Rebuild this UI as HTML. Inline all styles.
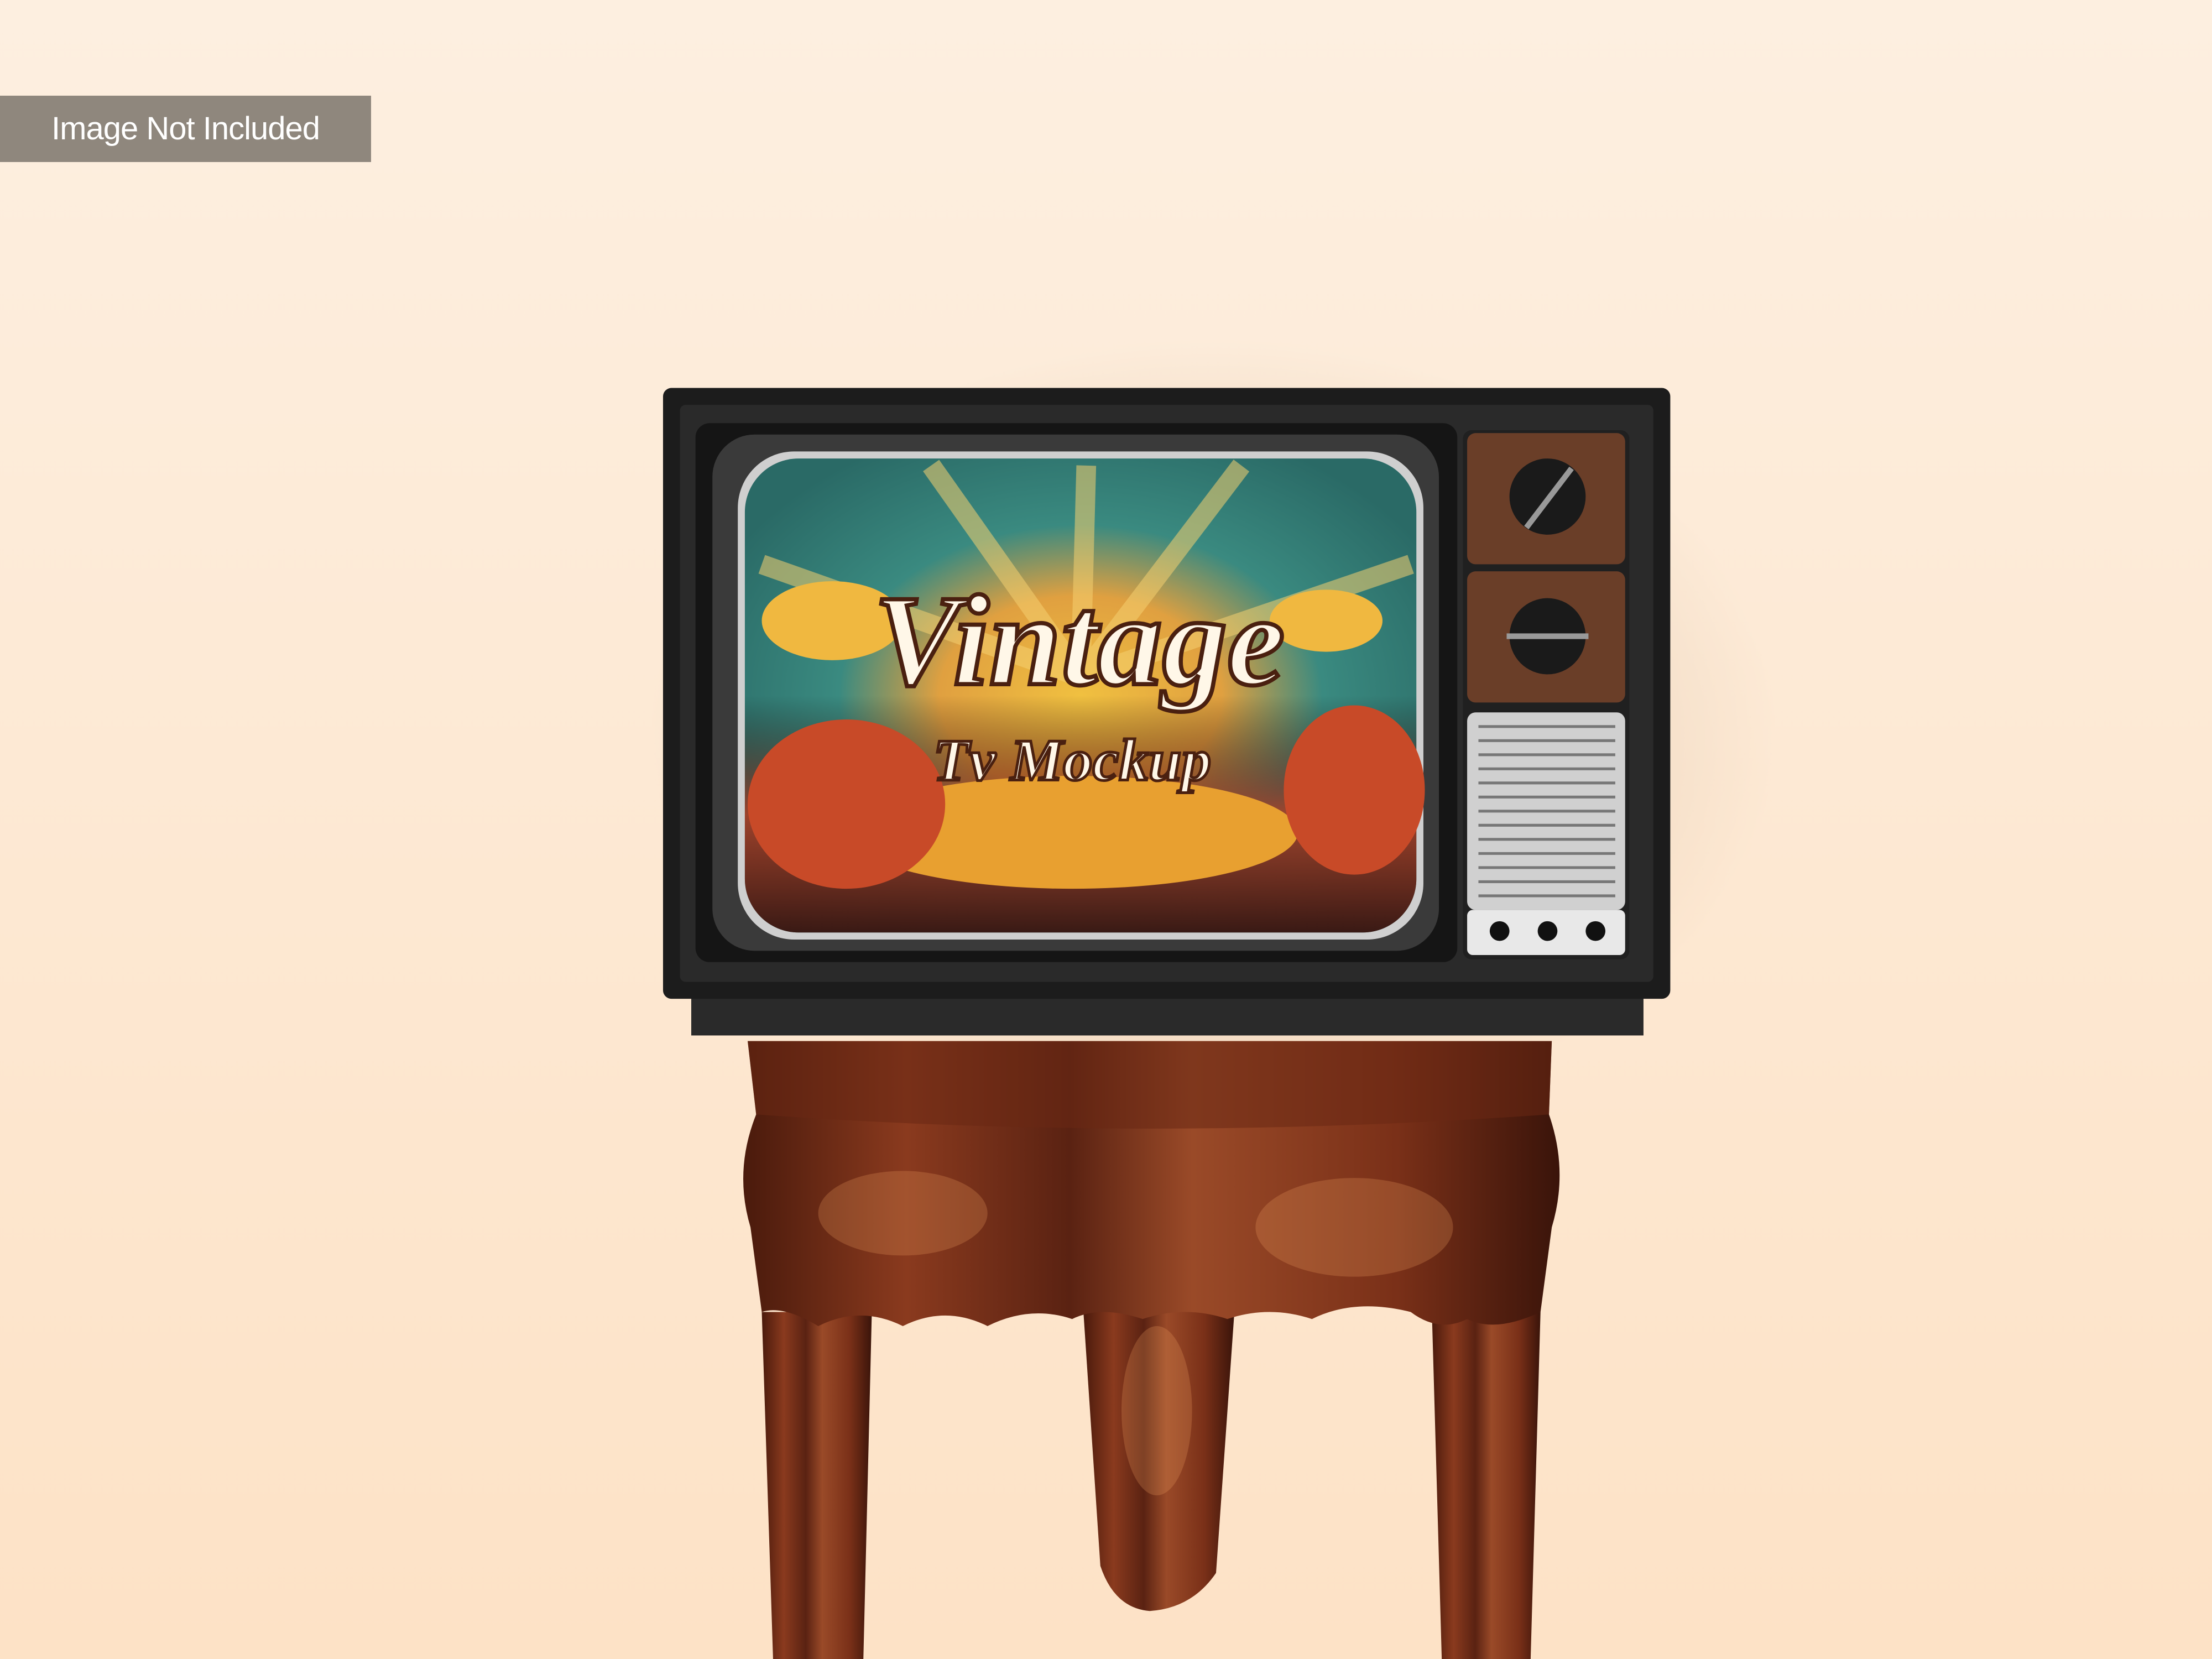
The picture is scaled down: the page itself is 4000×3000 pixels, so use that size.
<!DOCTYPE html>
<html><head><meta charset="utf-8"><style>
html,body{margin:0;padding:0;width:4000px;height:3000px;overflow:hidden;background:#fdeedd}
svg{position:absolute;left:0;top:0}
.lbl{position:absolute;left:0;top:173px;width:671px;height:120px;background:#8f877d;color:#fff;font-family:"Liberation Sans",sans-serif;font-size:58px;line-height:120px;text-align:center;letter-spacing:-1px}
</style></head><body>
<svg width="4000" height="3000" viewBox="0 0 1568 1176" preserveAspectRatio="none">
<defs>
<linearGradient id="bg" x1="0" y1="0" x2="0" y2="1"><stop offset="0" stop-color="#fdefe0"/><stop offset="1" stop-color="#fde2c6"/></linearGradient>
<linearGradient id="wood" x1="0" y1="0" x2="1" y2="0"><stop offset="0" stop-color="#4a1a0c"/><stop offset=".2" stop-color="#8a3a1e"/><stop offset=".4" stop-color="#5a2212"/><stop offset=".55" stop-color="#9a4a28"/><stop offset=".8" stop-color="#7a3018"/><stop offset="1" stop-color="#3a140a"/></linearGradient>
<radialGradient id="scr" cx=".5" cy=".5" r=".6"><stop offset="0" stop-color="#f0c040"/><stop offset=".35" stop-color="#e0a040"/><stop offset=".6" stop-color="#3a8a80"/><stop offset="1" stop-color="#2a6a66"/></radialGradient>
<linearGradient id="scrb" x1="0" y1="0" x2="0" y2="1"><stop offset="0" stop-color="#000" stop-opacity="0"/><stop offset=".5" stop-color="#000" stop-opacity="0"/><stop offset=".75" stop-color="#b03a20" stop-opacity=".85"/><stop offset="1" stop-color="#3a1510" stop-opacity=".95"/></linearGradient>
<radialGradient id="sh" cx=".5" cy=".5" r=".5"><stop offset="0" stop-color="#b89878" stop-opacity=".5"/><stop offset="1" stop-color="#b89878" stop-opacity="0"/></radialGradient>
</defs>
<rect width="1568" height="1176" fill="url(#bg)"/>
<ellipse cx="860" cy="520" rx="400" ry="280" fill="url(#sh)"/>
<!-- stool legs -->
<path d="M540 930 L548 1176 H612 L618 930 Z" fill="url(#wood)"/>
<path d="M1015 930 L1022 1176 H1085 L1092 930 Z" fill="url(#wood)"/>
<path d="M768 930 L780 1110 Q790 1140 815 1142 Q845 1140 862 1115 L875 930 Z" fill="url(#wood)"/>
<!-- stool body -->
<path d="M530 738 H1100 L1098 790 Q1112 830 1100 870 L1092 930 Q1060 945 1040 935 Q1020 945 1000 930 Q960 920 930 935 Q900 925 870 935 Q840 925 810 935 Q780 925 760 935 Q730 925 700 940 Q670 925 640 940 Q610 925 580 940 Q555 925 540 930 L532 870 Q520 830 536 790 Z" fill="url(#wood)"/>
<path d="M530 738 H1100 L1098 790 Q815 810 536 790 Z" fill="#6a2814" opacity=".55"/>
<g fill="#f0a060" opacity=".25"><ellipse cx="640" cy="860" rx="60" ry="30"/><ellipse cx="960" cy="870" rx="70" ry="35"/><ellipse cx="820" cy="1000" rx="25" ry="60"/></g>
<!-- tv base -->
<rect x="490" y="700" width="675" height="34" fill="#2a2a2a"/>
<!-- tv body -->
<rect x="470" y="275" width="714" height="433" rx="6" fill="#1c1c1c"/>
<rect x="482" y="287" width="690" height="409" rx="4" fill="#2a2a2a"/>
<rect x="493" y="300" width="540" height="382" rx="10" fill="#151515"/>
<rect x="505" y="308" width="515" height="366" rx="30" fill="#3a3a3a"/>
<rect x="523" y="320" width="486" height="346" rx="40" fill="#cfcfcf"/>
<rect x="528" y="325" width="476" height="336" rx="38" fill="url(#scr)"/>
<rect x="528" y="325" width="476" height="336" rx="38" fill="url(#scrb)"/>
<g stroke="#f5d070" stroke-width="14" opacity=".55">
<line x1="766" y1="480" x2="660" y2="330"/><line x1="766" y1="480" x2="770" y2="330"/><line x1="766" y1="480" x2="880" y2="330"/><line x1="766" y1="480" x2="540" y2="400"/><line x1="766" y1="480" x2="1000" y2="400"/>
</g>
<ellipse cx="590" cy="440" rx="50" ry="28" fill="#f0b840"/>
<ellipse cx="940" cy="440" rx="40" ry="22" fill="#f0b840"/>
<ellipse cx="760" cy="590" rx="160" ry="40" fill="#e8a030"/>
<ellipse cx="600" cy="570" rx="70" ry="60" fill="#c84a28"/>
<ellipse cx="960" cy="560" rx="50" ry="60" fill="#c84a28"/>
<text x="765" y="485" text-anchor="middle" font-family="Liberation Serif,serif" font-style="italic" font-weight="bold" font-size="92" fill="#fff7e8" stroke="#4a2010" stroke-width="3">Vintage</text>
<text x="760" y="553" text-anchor="middle" font-family="Liberation Serif,serif" font-style="italic" font-weight="bold" font-size="42" fill="#fff7e8" stroke="#4a2010" stroke-width="2">Tv Mockup</text>
<!-- controls -->
<rect x="1037" y="305" width="118" height="375" rx="6" fill="#202020"/>
<rect x="1040" y="307" width="112" height="93" rx="6" fill="#6a3e28"/>
<rect x="1040" y="405" width="112" height="93" rx="6" fill="#6a3e28"/>
<circle cx="1097" cy="352" r="27" fill="#1a1a1a"/><line x1="1082" y1="374" x2="1114" y2="332" stroke="#999" stroke-width="4"/>
<circle cx="1097" cy="451" r="27" fill="#1a1a1a"/><line x1="1068" y1="451" x2="1126" y2="451" stroke="#999" stroke-width="4"/>
<rect x="1040" y="505" width="112" height="140" rx="6" fill="#d0d0d0"/>
<g stroke="#777" stroke-width="2">
<line x1="1048" y1="515" x2="1145" y2="515"/><line x1="1048" y1="525" x2="1145" y2="525"/><line x1="1048" y1="535" x2="1145" y2="535"/><line x1="1048" y1="545" x2="1145" y2="545"/><line x1="1048" y1="555" x2="1145" y2="555"/><line x1="1048" y1="565" x2="1145" y2="565"/><line x1="1048" y1="575" x2="1145" y2="575"/><line x1="1048" y1="585" x2="1145" y2="585"/><line x1="1048" y1="595" x2="1145" y2="595"/><line x1="1048" y1="605" x2="1145" y2="605"/><line x1="1048" y1="615" x2="1145" y2="615"/><line x1="1048" y1="625" x2="1145" y2="625"/><line x1="1048" y1="635" x2="1145" y2="635"/>
</g>
<rect x="1040" y="645" width="112" height="32" rx="4" fill="#e8e8e8"/>
<circle cx="1063" cy="660" r="7" fill="#111"/><circle cx="1097" cy="660" r="7" fill="#111"/><circle cx="1131" cy="660" r="7" fill="#111"/>
</svg>
<div class="lbl">Image Not Included</div>
</body></html>
